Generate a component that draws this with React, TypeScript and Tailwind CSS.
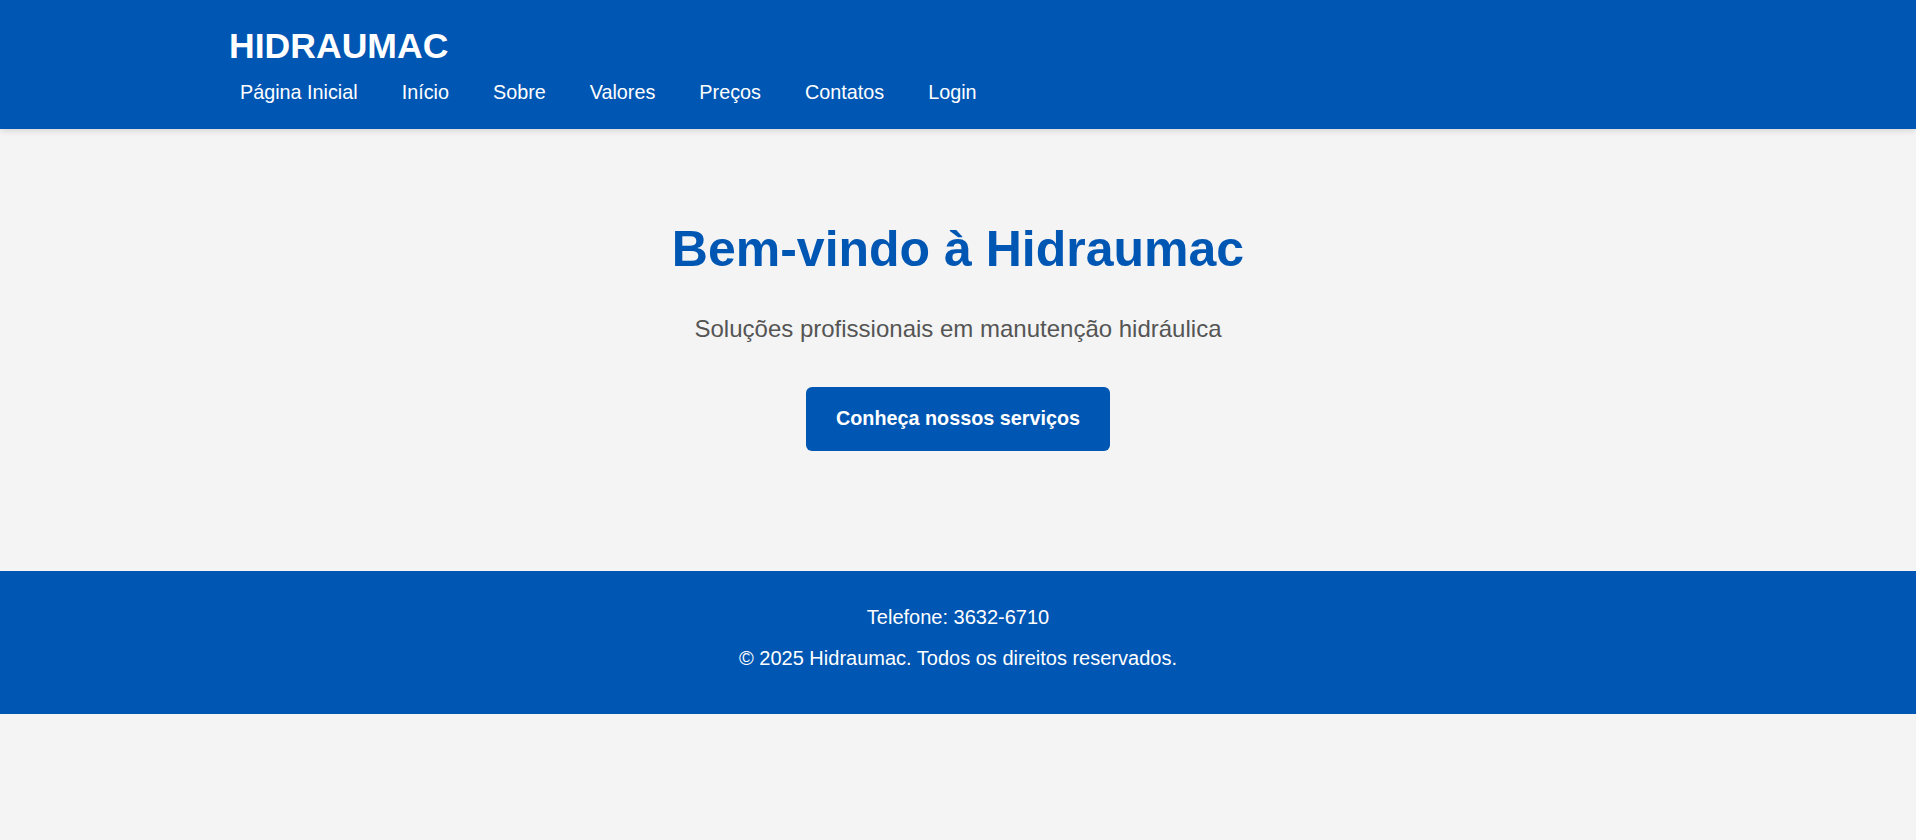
export default function App() {
  const links = ["Página Inicial", "Início", "Sobre", "Valores", "Preços", "Contatos", "Login"];

  return (
    <div className="min-h-[840px] bg-[#f4f4f4] font-['Liberation_Sans',Arial,sans-serif]">
      <header className="relative z-10 bg-[#0056b3] text-white shadow-[0_2px_6px_rgba(0,0,0,0.12)]">
        <div className="mx-auto w-[1458px] pt-[26px] pb-[26px]">
          <h1 className="text-[35.6px] font-bold leading-[1.15]">HIDRAUMAC</h1>
          <nav className="mt-[14px] flex gap-[22px]">
            {links.map((item) => (
              <a key={item} href="#" className="px-[11px] text-[19.8px] leading-[1.12] text-white">
                {item}
              </a>
            ))}
          </nav>
        </div>
      </header>

      <section className="flex flex-col items-center pt-[92px] pb-[120px] text-center">
        <h2 className="text-[50px] font-bold leading-[1.13] text-[#0056b3]">Bem-vindo à Hidraumac</h2>
        <p className="mt-[37px] text-[24px] leading-[1.15] text-[#555]">
          Soluções profissionais em manutenção hidráulica
        </p>
        <a
          href="#"
          className="mt-[45px] flex h-[64px] items-center rounded-[6px] bg-[#0056b3] px-[30px] text-[19.8px] font-bold text-white"
        >
          Conheça nossos serviços
        </a>
      </section>

      <footer className="flex flex-col items-center bg-[#0056b3] pt-[35px] pb-[45px] text-center text-white">
        <p className="text-[20px] leading-[1.1]">Telefone: 3632-6710</p>
        <p className="mt-[19px] text-[20px] leading-[1.1]">© 2025 Hidraumac. Todos os direitos reservados.</p>
      </footer>
    </div>
  );
}
